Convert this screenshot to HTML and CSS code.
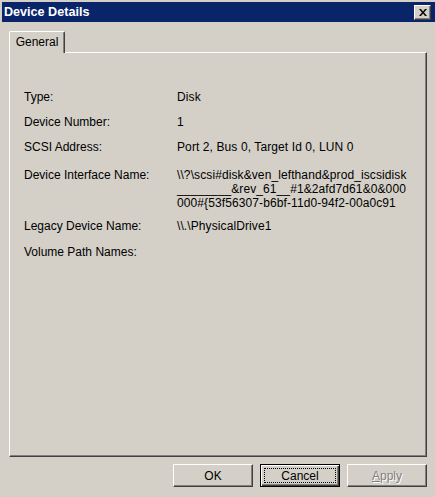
FILE: index.html
```html
<!doctype html>
<html>
<head>
	<meta charset="utf-8">
	<title>Device Details</title>
	<link rel="stylesheet" href="styles.css">
</head>
<body>
	<div class="window">
		<div class="titlebar">
			<span class="title">Device Details</span>
			<span class="close">
				<svg width="8" height="7" viewBox="0 0 8 7"><path d="M0 0h2l2 2.5 2-2.5h2l-3 3.5 3 3.5h-2l-2-2.5-2 2.5h-2l3-3.5z" fill="#000"/></svg>
			</span>
		</div>
		<div class="content">
			<div class="tabs">
				<div class="tab">General</div>
			</div>
			<div class="panel">
				<div class="row">
					<div class="label">Type:</div>
					<div class="value">Disk</div>
				</div>
				<div class="row">
					<div class="label">Device Number:</div>
					<div class="value">1</div>
				</div>
				<div class="row">
					<div class="label">SCSI Address:</div>
					<div class="value">Port 2, Bus 0, Target Id 0, LUN 0</div>
				</div>
				<div class="row multi">
					<div class="label">Device Interface Name:</div>
					<div class="value">\\?\scsi#disk&amp;ven_lefthand&amp;prod_iscsidisk<br>________&amp;rev_61__#1&amp;2afd7d61&amp;0&amp;000<br>000#{53f56307-b6bf-11d0-94f2-00a0c91</div>
				</div>
				<div class="row legacy">
					<div class="label">Legacy Device Name:</div>
					<div class="value">\\.\PhysicalDrive1</div>
				</div>
				<div class="row volume">
					<div class="label">Volume Path Names:</div>
					<div class="value"></div>
				</div>
			</div>
			<div class="buttons">
				<div class="btn">OK</div>
				<div class="btn default"><span class="focus">Cancel</span></div>
				<div class="btn disabled"><span class="u">A</span>pply</div>
			</div>
		</div>
	</div>
</body>
</html>
```
FILE: styles.css
```css
body {
	margin: 0;
	background-color: #d4d0c8;
	font-family: "Liberation Sans", Arial, sans-serif;
	font-size: 12px;
	color: #000;
}
.window {
	width: 435px;
	height: 497px;
	overflow: hidden;
	background-color: #d4d0c8;
}
.titlebar {
	display: flex;
	align-items: center;
	justify-content: space-between;
	height: 20px;
	margin: 2px 0 0 2px;
	padding: 0 4px 0 2px;
	background-color: #0a246a;
}
.title {
	color: #fff;
	font-weight: bold;
	font-size: 12.6px;
}
.close {
	display: flex;
	align-items: center;
	justify-content: center;
	box-sizing: border-box;
	width: 17px;
	height: 15px;
	background-color: #d4d0c8;
	border: 1px solid;
	border-color: #fff #404040 #404040 #fff;
	box-shadow: inset -1px -1px #808080;
}
.content {
	padding: 9px 8px 0 9px;
}
.tabs {
	display: flex;
	height: 21px;
}
.tab {
	box-sizing: border-box;
	width: 56px;
	height: 22px;
	padding-top: 3px;
	text-align: center;
	border: 1px solid;
	border-color: #fff #404040 transparent #fff;
	border-bottom: none;
	box-shadow: inset -1px 0 #808080;
	border-radius: 2px 2px 0 0;
	background-color: #d4d0c8;
	position: relative;
	z-index: 1;
}
.panel {
	display: flex;
	flex-direction: column;
	box-sizing: border-box;
	height: 405px;
	padding: 37px 0 0 14px;
	border: 1px solid;
	border-color: #fff #404040 #404040 #fff;
	box-shadow: inset -1px -1px #808080;
}
.row {
	display: flex;
	line-height: 14px;
	margin-bottom: 11px;
}
.row.multi {
	margin-top: 3px;
	margin-bottom: 9px;
}
.row.legacy {
	margin-bottom: 12px;
}
.label {
	width: 153px;
	flex: none;
}
.value {
	white-space: nowrap;
	letter-spacing: 0.1px;
}
.buttons {
	display: flex;
	justify-content: flex-end;
	gap: 7px;
	margin-top: 7px;
}
.btn {
	display: flex;
	align-items: center;
	justify-content: center;
	box-sizing: border-box;
	width: 80px;
	height: 23px;
	border: 1px solid;
	border-color: #fff #404040 #404040 #fff;
	box-shadow: inset -1px -1px #808080;
}
.btn.default {
	border: 1px solid #000;
	box-shadow: inset 1px 1px #fff, inset -1px -1px #404040, inset -2px -2px #808080;
	padding: 3px;
}
.focus {
	display: flex;
	align-items: center;
	justify-content: center;
	width: 100%;
	height: 100%;
	border: 1px dotted #000;
	box-sizing: border-box;
}
.btn.disabled {
	color: #808080;
	text-shadow: 1px 1px #fff;
}
.u {
	text-decoration: underline;
}
```
